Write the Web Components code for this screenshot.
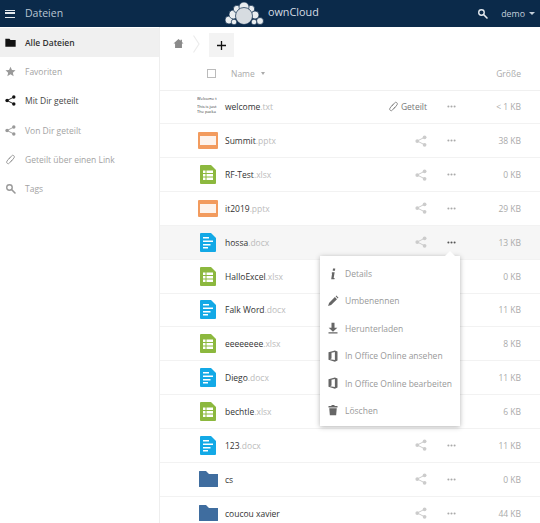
<!DOCTYPE html>
<html lang="de"><head><meta charset="utf-8"><title>ownCloud</title>
<style>
html,body{margin:0;padding:0;height:523px;overflow:hidden;background:#fff}
body{font-family:"Open Sans","Liberation Sans",sans-serif;color:#555}
</style></head><body>
<oc-app>
  <oc-header slot="header"></oc-header>
  <oc-sidebar slot="side">
    <oc-nav icon="folder" active strong>Alle Dateien</oc-nav>
    <oc-nav icon="star">Favoriten</oc-nav>
    <oc-nav icon="share" strong>Mit Dir geteilt</oc-nav>
    <oc-nav icon="share">Von Dir geteilt</oc-nav>
    <oc-nav icon="link">Geteilt über einen Link</oc-nav>
    <oc-nav icon="search">Tags</oc-nav>
  </oc-sidebar>
  <oc-files slot="main">
    <oc-toolbar></oc-toolbar>
    <oc-table-head></oc-table-head>
    <oc-row type="thumb" name="welcome" ext=".txt" size="&lt; 1 KB" shared></oc-row>
    <oc-row type="pptx" name="Summit" ext=".pptx" size="38 KB"></oc-row>
    <oc-row type="xlsx" name="RF-Test" ext=".xlsx" size="0 KB"></oc-row>
    <oc-row type="pptx" name="it2019" ext=".pptx" size="29 KB"></oc-row>
    <oc-row type="docx" name="hossa" ext=".docx" size="13 KB" selected></oc-row>
    <oc-row type="xlsx" name="HalloExcel" ext=".xlsx" size="0 KB"></oc-row>
    <oc-row type="docx" name="Falk Word" ext=".docx" size="11 KB"></oc-row>
    <oc-row type="xlsx" name="eeeeeeee" ext=".xlsx" size="8 KB"></oc-row>
    <oc-row type="docx" name="Diego" ext=".docx" size="11 KB"></oc-row>
    <oc-row type="xlsx" name="bechtle" ext=".xlsx" size="6 KB"></oc-row>
    <oc-row type="docx" name="123" ext=".docx" size="11 KB"></oc-row>
    <oc-row type="folder" name="cs" size="0 KB"></oc-row>
    <oc-row type="folder" name="coucou xavier" size="44 KB"></oc-row>
    <oc-menu></oc-menu>
  </oc-files>
</oc-app>
<script>
const ICONS={
 folder:'<path d="M.5 2.500h6l1.500 1.800h7.500v9.700H.5z" fill="currentColor"/>',
 star:'<path d="M8 1l2.100 4.800 5.200.5-3.900 3.400 1.200 5.100L8 12.100 3.400 14.800l1.200-5.100L.7 6.300l5.200-.5z" fill="currentColor"/>',
 share:'<circle cx="12.800" cy="3" r="2.500" fill="currentColor"/><circle cx="12.800" cy="13" r="2.500" fill="currentColor"/><circle cx="3" cy="8" r="2.500" fill="currentColor"/><path d="M12.800 3L3 8l9.800 5" fill="none" stroke="currentColor" stroke-width="1.300"/>',
 link:'<path d="M6.300 6.800l3.200-4a2.300 2.300 0 0 1 3.600 2.900L9.200 10.600M9.700 9.200l-3.200 4a2.300 2.300 0 0 1-3.600-2.900L6.800 5.400" fill="none" stroke="currentColor" stroke-width="1.400" stroke-linecap="round"/>',
 search:'<circle cx="6.500" cy="6.500" r="4" fill="none" stroke="currentColor" stroke-width="2"/><path d="M9.500 9.500L14.500 14.500" stroke="currentColor" stroke-width="2.400" stroke-linecap="round"/>',
 dots:'<circle cx="3.500" cy="8" r="1.500" fill="currentColor"/><circle cx="8" cy="8" r="1.500" fill="currentColor"/><circle cx="12.500" cy="8" r="1.500" fill="currentColor"/>',
 info:'<path d="M8 .8h3l-.4 2.800H7.600zM6.600 5.500h3.600l-1.300 7.700h1.300l-.3 1.800H5.600l1.200-7.700H6.200z" fill="currentColor"/>',
 pencil:'<path d="M1.500 14.500l1.200-4 7.800-7.800 2.800 2.800-7.800 7.800zM11.500 1.700l1-1 2.800 2.800-1 1z" fill="currentColor"/>',
 download:'<path d="M6 1h4v6.500h3.800L8 13 2.200 7.500H6zM2 13.500h12V15.300H2z" fill="currentColor"/>',
 office:'<path d="M2 3L10.500.5 14 2v12l-3.500 1.500L2 13zM10.500 2.800L6 3.800v7.600L4 12.300l6.500.9z" fill="currentColor" fill-rule="evenodd"/>',
 trash:'<path d="M2 2.500h4V1.300h4v1.200h4v2H2zM3 5.500h10l-.8 9.500H3.800z" fill="currentColor"/>',
 home:'<path d="M8 1.500l3 2.600V2.500h2v3.400l2.300 2.100H13v6.500H3V8H.7z" fill="currentColor"/>'
};
const icon=(n,s=16)=>`<svg width="${s}" height="${s}" viewBox="0 0 16 16" aria-hidden="true">${ICONS[n]}</svg>`;
function def(name,css,render){customElements.define(name,class extends HTMLElement{
  connectedCallback(){if(this.shadowRoot)return;const r=this.attachShadow({mode:'open'});r.innerHTML=`<style>${css}</style>`+render(this);}
});}

def('oc-app',`:host{display:grid;grid-template-columns:160px 380px;grid-template-rows:27px 496px;width:540px;height:523px;overflow:hidden}
 .h{grid-column:1/3}`,()=>`<div class="h"><slot name="header"></slot></div><slot name="side"></slot><slot name="main"></slot>`);

def('oc-header',`:host{display:flex;align-items:center;height:27px;background:#0b2a4a;color:#fff;font-size:10px;position:relative}
 .burger{width:10px;height:8px;margin-left:5px;border-top:1.500px solid #e4e9ee;border-bottom:1.500px solid #e4e9ee;position:relative;box-sizing:border-box}
 .burger:after{content:"";position:absolute;left:0;right:0;top:1.750px;height:1.500px;background:#e4e9ee}
 .title{margin-left:10px;color:#b9c6d3;font-size:10.500px;margin-top:-1px}
 .logo{position:absolute;left:224px;top:1px;display:flex}
 .brand{position:absolute;left:268px;top:4px;font-size:10.800px;color:#d6dde4}
 .right{margin-left:auto;display:flex;align-items:center;color:#c4cfda;font-size:8.800px;padding-right:5px}
 .right svg{color:#e6ebf0;margin-right:13px;margin-top:-1px}
 .caret{width:0;height:0;border:3px solid transparent;border-top:3px solid #c4cfda;border-bottom:0;margin-left:4px}`,
 ()=>`<div class="burger"></div><div class="title">Dateien</div>
 <div class="logo"><svg width="42" height="25" viewBox="0 0 42 25">
  <g fill="#e9edf0" stroke="#0b2a4a" stroke-width="0.700">
  <circle cx="5" cy="19" r="4"/><circle cx="9.500" cy="13.500" r="4.500"/><circle cx="13" cy="8" r="3.700"/><circle cx="27" cy="8" r="3.700"/><circle cx="31" cy="14" r="4"/><circle cx="36" cy="20" r="3.500"/><circle cx="30" cy="21" r="2.800"/><circle cx="10" cy="21" r="2.800"/><circle cx="20" cy="6" r="5"/>
  <circle cx="20" cy="15" r="8.500" fill="#d7dce1"/></g></svg></div>
 <span class="brand">ownCloud</span>
 <div class="right">${icon('search',11)}demo<span class="caret"></span></div>`);

def('oc-sidebar',`:host{display:flex;flex-direction:column;width:160px;height:496px;box-sizing:border-box;padding-top:1px;border-right:1px solid #eee;background:#fff}`,()=>`<slot></slot>`);

def('oc-nav',`:host{display:flex;align-items:center;height:29.200px;color:#a3a3a3;font-size:8.500px;flex:none}
 :host([active]){background:#f0f0f0}
 :host([strong]){color:#444}
 :host([active]){font-weight:600;color:#333}
 .i{width:11px;height:11px;margin:0 9px 0 5px;display:flex;color:#999}
 :host([strong]) .i{color:#111}`,
 el=>`<span class="i">${icon(el.getAttribute('icon'),11)}</span><slot></slot>`);

def('oc-files',`:host{display:block;position:relative;height:496px;overflow:hidden;background:#fff}`,()=>`<slot></slot>`);

def('oc-toolbar',`:host{display:flex;align-items:center;height:32px;padding:4px 0 0 13px;box-sizing:border-box;color:#8a8a8a}
 .home{display:flex;width:11px;margin-top:-3px}
 .chev{margin-left:9px;display:flex;margin-top:-3px}
 .plus{margin-left:9px;width:25px;height:24px;background:#f3f3f3;display:flex;align-items:center;justify-content:center;color:#111}`,
 ()=>`<span class="home">${icon('home',11)}</span><svg class="chev" width="7" height="18" viewBox="0 0 7 18"><path d="M.5 .5l5.500 8.500-5.500 8.500" fill="none" stroke="#ececec" stroke-width="1.200"/></svg><div class="plus"><svg width="9" height="9" viewBox="0 0 9 9"><path d="M4.500 0v9M0 4.500h9" stroke="currentColor" stroke-width="1.300"/></svg></div>`);

def('oc-table-head',`:host{display:flex;align-items:center;height:31.500px;box-sizing:border-box;padding:0 19px 2px 47px;border-bottom:1px solid #f0f0f0;color:#aaa;font-size:8.500px}
 .cb{width:7px;height:7px;border:1px solid #bbb;margin-right:15px}
 .caret{width:0;height:0;border:2.500px solid transparent;border-top:3px solid #aaa;border-bottom:0;margin-left:6px}
 .size{margin-left:auto}`,
 ()=>`<span class="cb"></span><span>Name</span><span class="caret"></span><span class="size">Größe</span>`);

const FILE={
 pptx:`<svg width="20" height="17" viewBox="0 0 20 17"><path d="M1 0h18a1 1 0 0 1 1 1v15a1 1 0 0 1-1 1H1a1 1 0 0 1-1-1V1a1 1 0 0 1 1-1z" fill="#f29b5e"/><rect x="2" y="4" width="16" height="9" fill="#fdf3ec"/></svg>`,
 xlsx:`<svg width="16" height="19" viewBox="0 0 16 19"><path d="M1 0h10l5 5v13a1 1 0 0 1-1 1H1a1 1 0 0 1-1-1V1a1 1 0 0 1 1-1z" fill="#8cb83e"/><g fill="#fff"><rect x="3" y="5.500" width="2.500" height="2.500"/><rect x="6.500" y="5.500" width="6.500" height="2.500"/><rect x="3" y="9" width="2.500" height="2.500"/><rect x="6.500" y="9" width="6.500" height="2.500"/><rect x="3" y="12.500" width="2.500" height="2.500"/><rect x="6.500" y="12.500" width="6.500" height="2.500"/></g></svg>`,
 docx:`<svg width="16" height="19" viewBox="0 0 16 19"><path d="M1 0h10l5 5v13a1 1 0 0 1-1 1H1a1 1 0 0 1-1-1V1a1 1 0 0 1 1-1z" fill="#13a9e6"/><g fill="#fff"><rect x="3" y="4" width="6" height="1.500"/><rect x="3" y="7.500" width="10" height="1.500"/><rect x="3" y="11" width="7.500" height="1.500"/><rect x="3" y="14" width="5" height="1.500"/></g></svg>`,
 folder:`<svg width="19" height="16" viewBox="0 0 19 16"><path d="M.5 0H7l3 3h9v12.500a.5.5 0 0 1-.5.500H.500a.5.5 0 0 1-.5-.5V.5a.5.5 0 0 1 .5-.5z" fill="#3f6d9f"/></svg>`
};
def('oc-row',`:host{display:flex;align-items:center;height:33.850px;box-sizing:border-box;border-bottom:1px solid #f2f2f2;padding-right:19px;font-size:8.500px;color:#555}
 :host([selected]){background:#f6f6f6}
 .thumbbox{width:65px;display:flex;justify-content:flex-end;flex:none;padding-right:7px;box-sizing:border-box}
 .t{width:22px;height:24px;overflow:hidden;font-size:4px;line-height:4.600px;color:#333;white-space:nowrap;margin-right:-1px;padding-top:2px;box-sizing:border-box}
 .t div{height:4.600px}
 .t .g{height:3.400px}
 .fi{width:20px;display:flex;justify-content:center}
 .n{color:#333}.e{color:#bbb}
 .sp{flex:1}
 .act{display:flex;align-items:center;color:#ccc;margin-right:14px;font-size:8.500px}
 .shared{color:#777}.shared svg{margin-right:2px;color:#888}
 .dots{width:20px;display:flex;justify-content:center;color:#aaa}
 :host([selected]) .dots{color:#555}
 .size{width:60px;text-align:right;color:#aaa}`,
 el=>{const ty=el.getAttribute('type'),e=el.getAttribute('ext')||'';
  const th=ty==='thumb'?`<div class="t"><div>Welcome t</div><div class="g"></div><div>This is just</div><div>The packa</div></div>`:`<div class="fi">${FILE[ty]}</div>`;
  return `<div class="thumbbox">${th}</div><span class="n">${el.getAttribute('name')}</span><span class="e">${e}</span><span class="sp"></span>
  <span class="act ${el.hasAttribute('shared')?'shared':''}">${el.hasAttribute('shared')?icon('link',11)+'Geteilt':icon('share',12)}</span>
  <span class="dots">${icon('dots',11)}</span><span class="size">${el.getAttribute('size').replace('<','&lt;')}</span>`;});

def('oc-menu',`:host{position:absolute;left:160px;top:229px;width:140px;height:170px;box-sizing:border-box;padding-top:2px;background:#fff;box-shadow:0 1px 5px rgba(0,0,0,.3);display:flex;flex-direction:column;justify-content:center;color:#999;font-size:8.500px}
 :host::before{content:"";position:absolute;right:4px;top:-5px;width:0;height:0;border:6px solid transparent;border-top:0;border-bottom:6px solid #fff}
 .it{display:flex;align-items:center;height:27.400px;padding-left:7px;white-space:nowrap}
 .it svg{margin-right:6px;color:#666;flex:none}`,
 ()=>[['info','Details'],['pencil','Umbenennen'],['download','Herunterladen'],['office','In Office Online ansehen'],['office','In Office Online bearbeiten'],['trash','Löschen']].map(([i,t])=>`<div class="it">${icon(i,12)}<span>${t}</span></div>`).join(''));
</script>
</body></html>
